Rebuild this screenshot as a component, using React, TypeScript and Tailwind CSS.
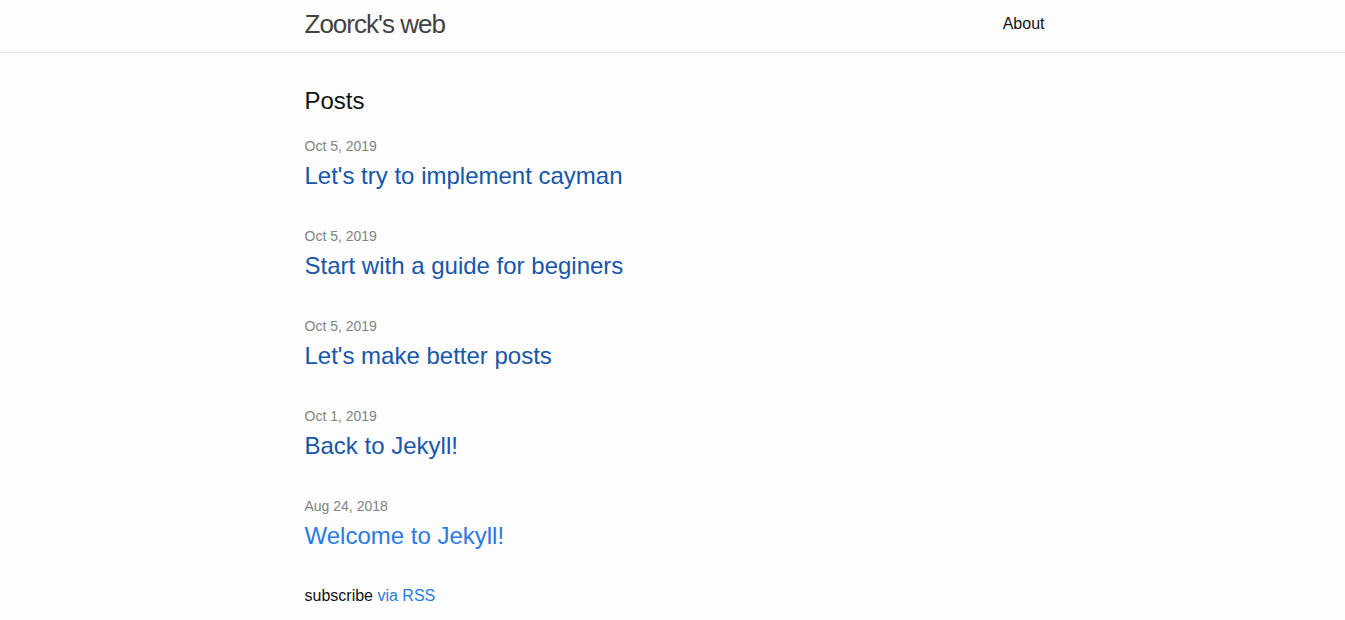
const posts = [
  { date: 'Oct 5, 2019', title: "Let's try to implement cayman", visited: true },
  { date: 'Oct 5, 2019', title: 'Start with a guide for beginers', visited: true },
  { date: 'Oct 5, 2019', title: "Let's make better posts", visited: true },
  { date: 'Oct 1, 2019', title: 'Back to Jekyll!', visited: true },
  { date: 'Aug 24, 2018', title: 'Welcome to Jekyll!', visited: false },
];

export default function App() {
  return (
    <div className="min-h-screen bg-[#fdfdfd] text-[#111] font-['Liberation_Sans',Arial,sans-serif]">
      {/* site header */}
      <header className="border-b border-[#e8e8e8]">
        <div className="mx-auto flex h-[52px] max-w-[800px] items-start justify-between pl-[32px] pr-[28px]">
          <a href="#" className="text-[26px] leading-[48px] tracking-[-1px] text-[#424242]">
            Zoorck's web
          </a>
          <nav>
            <a href="#" className="text-base leading-[48px] text-[#111]">
              About
            </a>
          </nav>
        </div>
      </header>

      <main className="mx-auto max-w-[800px] pl-[32px] pr-[28px] pt-[30px]">
        <h2 className="mb-[17px] text-[24px] leading-[36px]">Posts</h2>
        <ul className="flex flex-col gap-[32px]">
          {posts.map((p, i) => (
            <li key={i}>
              <span className="block text-sm leading-[21px] text-[#828282]">{p.date}</span>
              <h3 className="text-[24px] leading-[37px]">
                <a href="#" className={p.visited ? 'text-[#1756a9]' : 'text-[#2a7ae2]'}>
                  {p.title}
                </a>
              </h3>
            </li>
          ))}
        </ul>
        <p className="mt-[30px] text-base leading-6">
          subscribe{' '}
          <a href="#" className="text-[#2a7ae2]">
            via RSS
          </a>
        </p>
      </main>
    </div>
  );
}
